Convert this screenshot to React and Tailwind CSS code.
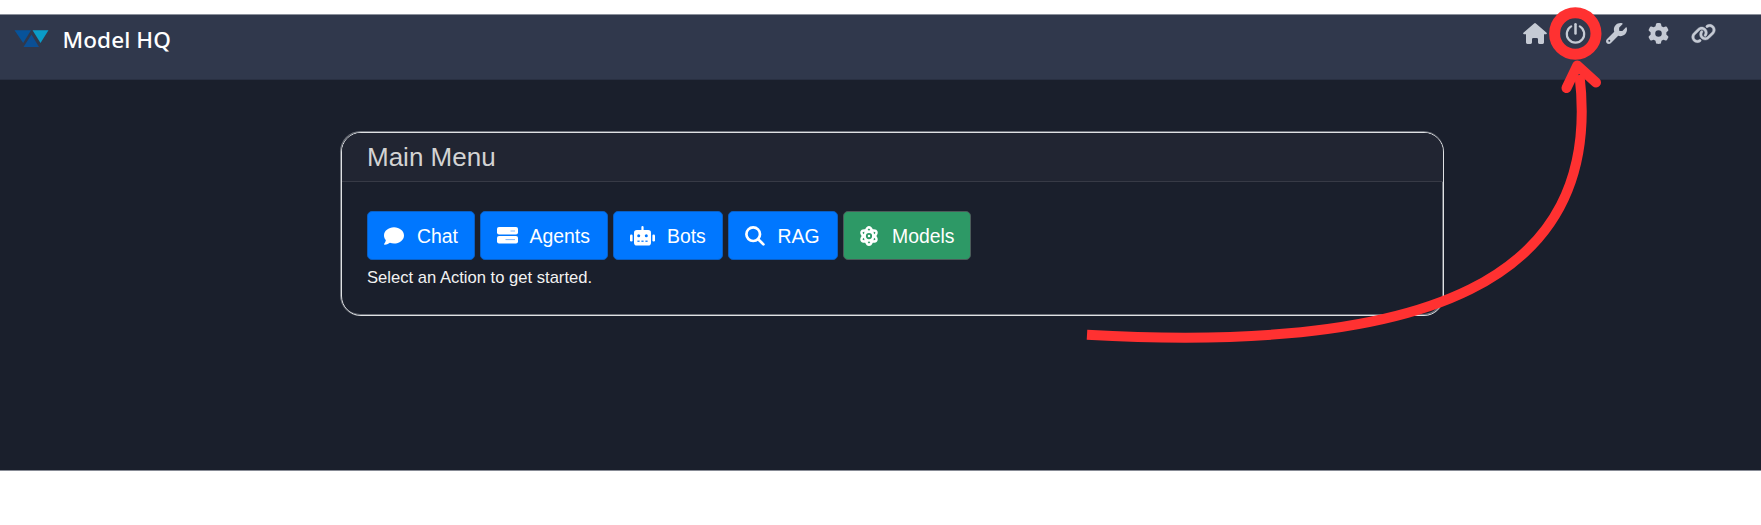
import React from "react";
import { FaWrench, FaGear, FaLink, FaComment } from "react-icons/fa6";
import { FaAtom } from "react-icons/fa";

const Logo = () => (
  <svg className="block h-[18px] w-[36px]" viewBox="0 0 36 18">
    <path d="M.5.3H17L9.2 13Z" fill="#07539a" />
    <path d="M17.5 4.5 25 17H9.5Z" fill="#0b4f94" />
    <path d="M18.5.3H34.5L26.5 13Z" fill="#0a9cc8" />
  </svg>
);

const House = () => (
  <svg className="block h-[21px] w-[24px]" viewBox="0 0 24 21" fill="currentColor">
    <path d="M11.1.4q.9-.7 1.8 0L23.6 9.8q.8 1.3-.7 1.5H21V19.6Q21 21 19.6 21H16.4Q15 21 15 19.6V16.3Q15 15 13.7 15H10.3Q9 15 9 16.3V19.6Q9 21 7.6 21H4.4Q3 21 3 19.6V11.3H1.1Q-.4 11.1.4 9.8Z" />
  </svg>
);

const Power = () => (
  <svg className="block h-[21px] w-[21px]" viewBox="0 0 21 21" fill="none" stroke="currentColor" strokeWidth="2.2" strokeLinecap="round">
    <path d="M10.5 1.3V10.5" strokeWidth="2.5" />
    <path d="M6.2 3.4A8.7 8.7 0 1 0 14.8 3.4" />
  </svg>
);

const Stack = () => (
  <svg className="block h-[17px] w-[21px]" viewBox="0 0 21 17">
    <rect y="0" width="21" height="7.4" rx="2" fill="white" />
    <rect y="9" width="21" height="7.4" rx="2" fill="white" />
    <path d="M13.5 4h4.5M8.5 12.6h9.5" stroke="#7db8ff" strokeWidth="1" />
  </svg>
);

const Robot = () => (
  <svg className="block h-[20px] w-[25px]" viewBox="0 0 25 20" fill="white">
    <rect x="11.4" y="0" width="2.2" height="5" rx="1.1" />
    <rect x="4" y="4" width="17" height="15.5" rx="2.8" />
    <rect x="0" y="8.5" width="2.6" height="7" rx="1.2" />
    <rect x="22.4" y="8.5" width="2.6" height="7" rx="1.2" />
    <g fill="#0077ff">
      <circle cx="8.7" cy="9.8" r="1.5" />
      <circle cx="16.3" cy="9.8" r="1.5" />
      <rect x="7.4" y="14.6" width="2.2" height="1.2" />
      <rect x="11.4" y="14.6" width="2.2" height="1.2" />
      <rect x="15.4" y="14.6" width="2.2" height="1.2" />
    </g>
  </svg>
);

const Search = () => (
  <svg className="block h-[20px] w-[20px]" viewBox="0 0 20 20" fill="none" stroke="white" strokeWidth="2.7" strokeLinecap="round">
    <circle cx="8.2" cy="8.2" r="6.8" />
    <path d="M13.2 13.2 18.4 18.4" />
  </svg>
);

const base = "flex h-[49px] shrink-0 items-center rounded-[5px] border text-[19.4px] leading-[22px] text-white";
const blue = base + " border-[#0a5fc4] bg-[#0077ff]";

export default function App() {
  return (
    <div className="relative h-[525px] w-[1761px] overflow-hidden bg-white pt-[14px] font-['Liberation_Sans',sans-serif]">
      <div className="h-[457px] border-b border-[#878b95] bg-[#1a1f2c]">
        <header className="flex h-[66px] items-start border-t border-b border-t-[#8b909b] border-b-[#293042] bg-[#30384c] pl-[14px]">
          <div className="pt-[15px]"><Logo /></div>
          <div className="ml-[12.5px] mt-[10px] font-['Noto_Sans',sans-serif] text-[22.5px] font-medium leading-[30px] tracking-[0.1px] text-white">Model HQ</div>
          <nav className="ml-auto mr-[45px] mt-[8px] flex h-[21px] items-center text-[#c5cad4]">
            <House />
            <div className="ml-[18px]"><Power /></div>
            <FaWrench className="ml-[20px] h-[21px] w-[21px]" />
            <FaGear className="ml-[21px] h-[21px] w-[21px]" />
            <FaLink className="ml-[22px] h-[25px] w-[25px]" stroke="currentColor" strokeWidth="10" />
          </nav>
        </header>
        <main className="ml-[341px] mt-[52px] h-[184px] w-[1103px] rounded-[20px] border border-[#dfe1e4] shadow-[-0.5px_-0.5px_0_0.5px_#6d717a,inset_-1px_-1px_0_0_#6d717a]">
          <h1 className="flex h-[49px] items-center rounded-t-[19px] border-b border-[#373a46] bg-[#212532] pl-[25px] text-[26px] leading-none text-[#d3d3d3]">Main Menu</h1>
          <div className="flex gap-[5px] pl-[25px] pt-[29px]">
            <button className={blue + " w-[108px] pl-[16px]"}><FaComment className="mr-[13px] h-5 w-5" />Chat</button>
            <button className={blue + " w-[127.5px] pl-[15.5px]"}><span className="mr-[12px]"><Stack /></span>Agents</button>
            <button className={blue + " w-[110.5px] pl-[16px]"}><span className="mr-[12.5px]"><Robot /></span>Bots</button>
            <button className={blue + " w-[109.5px] pl-[16px]"}><span className="mr-[12.5px]"><Search /></span>RAG</button>
            <button className={base + " w-[128.5px] border-[#4b5c5a] bg-[#2d9966] pl-[15.5px]"}><FaAtom className="mr-[13px] h-5 w-5" />Models</button>
          </div>
          <p className="pl-[25px] pt-[7px] text-[16.6px] leading-[22px] text-[#f2f2f2]">Select an Action to get started.</p>
        </main>
      </div>
      <svg className="absolute inset-0 h-[525px] w-[1761px]" viewBox="0 0 1761 525" fill="none" stroke="#ff3131">
        <circle cx="1575.3" cy="33.5" r="20.7" strokeWidth="11" />
        <path d="M1087 334.7C1428 354 1604 281 1579.5 75" strokeWidth="10" />
        <path d="M1566.5 88 1577.3 65.5 1596 82.5" strokeWidth="10" strokeLinecap="round" strokeLinejoin="round" />
      </svg>
    </div>
  );
}
